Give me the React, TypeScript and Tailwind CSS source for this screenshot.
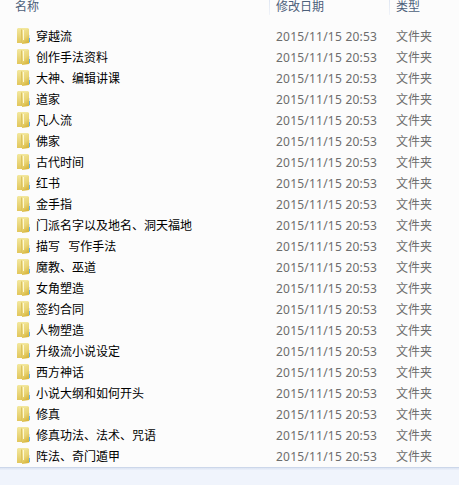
const folders = [
  '穿越流',
  '创作手法资料',
  '大神、编辑讲课',
  '道家',
  '凡人流',
  '佛家',
  '古代时间',
  '红书',
  '金手指',
  '门派名字以及地名、洞天福地',
  '描写  写作手法',
  '魔教、巫道',
  '女角塑造',
  '签约合同',
  '人物塑造',
  '升级流小说设定',
  '西方神话',
  '小说大纲和如何开头',
  '修真',
  '修真功法、法术、咒语',
  '阵法、奇门遁甲',
];

function FolderGradients() {
  return (
    <svg className="absolute h-0 w-0" aria-hidden="true">
      <defs>
        <linearGradient id="folder-back" x1="0" y1="0" x2="0" y2="1">
          <stop offset="0" stopColor="#f3e89f" />
          <stop offset="1" stopColor="#e2c75c" />
        </linearGradient>
        <linearGradient id="folder-front" x1="0" y1="0" x2="0.4" y2="1">
          <stop offset="0" stopColor="#f2e598" />
          <stop offset="0.6" stopColor="#e9d576" />
          <stop offset="1" stopColor="#d9b942" />
        </linearGradient>
      </defs>
    </svg>
  );
}

function FolderIcon() {
  return (
    <svg width="14" height="17" viewBox="0 0 14 17" className="shrink-0">
      <path d="M0 1 1 0H11L12 1V15H0Z" fill="url(#folder-back)" />
      <path d="M4 1.5H5V15H4Z" fill="#dcc35f" />
      <path d="M6 2H7V12H6Z" fill="#fdf8d6" />
      <path d="M7 2 12 1V15L5 16V13L7 12Z" fill="url(#folder-front)" />
      <path d="M12 7H13V15H12Z" fill="#dbe7ec" />
      <path d="M12 10H13V14H12Z" fill="#6bb6e6" />
    </svg>
  );
}

export default function App() {
  return (
    <div className="flex h-[485px] w-[459px] flex-col overflow-hidden bg-[#f0f4fc] font-['Noto_Sans','Noto_Sans_CJK_SC',sans-serif] text-[12px]">
      <FolderGradients />
      <div className="h-[467px] shrink-0 bg-[#fcfcfc]">
        <div className="flex h-[26px] leading-[13px] text-[#4c607a]">
          <div className="w-[269px] pl-[15px]">名称</div>
          <div className="h-[15px] w-px bg-linear-to-b from-[#dfe6f2] to-[#f0f3f9]" />
          <div className="w-[119px] pl-[6px]">修改日期</div>
          <div className="h-[15px] w-px bg-linear-to-b from-[#dfe6f2] to-[#f0f3f9]" />
          <div className="pl-[6px]">类型</div>
        </div>
        {folders.map((name) => (
          <div key={name} className="flex h-[21px] items-center leading-[21px] text-[#6d6d6d]">
            <div className="flex w-[276px] items-center gap-[5px] pl-[17px] text-black">
              <FolderIcon />
              <span className="whitespace-pre [word-spacing:1px]">{name}</span>
            </div>
            <div className="w-[120px] tracking-[0.22px]">2015/11/15 20:53</div>
            <div>文件夹</div>
          </div>
        ))}
      </div>
      <div className="h-[3px] shrink-0 border-t border-[#ccd7ea] bg-linear-to-b from-[#dde5f3] to-[#ebf0fa]" />
    </div>
  );
}
